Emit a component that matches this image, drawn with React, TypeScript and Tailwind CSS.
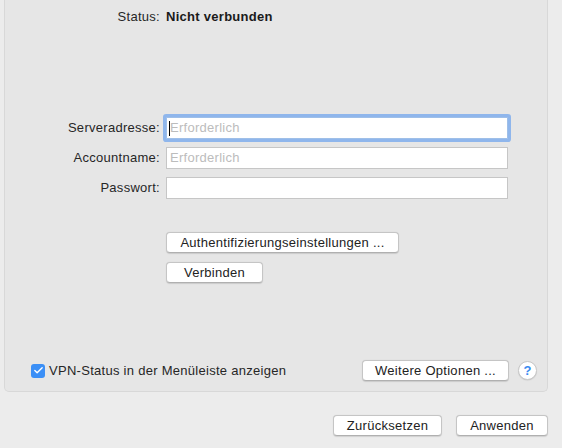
import { Check } from "lucide-react"

const btn =
  "flex h-[21px] items-center justify-center rounded-[4px] border border-[#c5c5c5] border-b-[#b0b0b0] bg-white text-[13px] text-[#222] shadow-[0_0.5px_1px_rgba(0,0,0,0.12)]"

function Field({
  label,
  placeholder,
  focused,
}: {
  label: string
  placeholder?: string
  focused?: boolean
}) {
  return (
    <div className="grid grid-cols-[155px_342px] items-center gap-[6px]">
      <span className="text-right text-[13px] text-[#262626]">{label}</span>
      <div
        className={
          focused
            ? "relative flex h-[22px] items-center rounded-[1px] border border-[#9fbfe8] bg-white pl-[3px] shadow-[0_0_0_3px_#8fb6ec]"
            : "flex h-[22px] items-center border border-[#c6c6c6] bg-white pl-[3px]"
        }
      >
        {focused ? <span className="absolute left-[2px] top-[3px] h-[15px] w-px bg-black" /> : null}
        {placeholder ? (
          <span className="text-[13px] text-[#bcbcbc]">{placeholder}</span>
        ) : null}
      </div>
    </div>
  )
}

export default function App() {
  return (
    <div className="h-[448px] w-[562px] overflow-hidden bg-[#ececec] font-['Liberation_Sans',Arial,sans-serif] tracking-[0.28px]">
      <div className="ml-[4px] mr-[14px] flex h-[392px] flex-col rounded-b-[5px] border-x border-b border-[#d8d8d8] bg-[#e6e6e6]">
        <div className="grid grid-cols-[155px_1fr] gap-[6px] pt-[9px] text-[13px] leading-[16px]">
          <span className="text-right text-[#262626]">Status:</span>
          <span className="font-bold text-[#1a1a1a]">Nicht verbunden</span>
        </div>

        <div className="mt-[92px] flex flex-col gap-[8px]">
          <Field label="Serveradresse:" placeholder="Erforderlich" focused />
          <Field label="Accountname:" placeholder="Erforderlich" />
          <Field label="Passwort:" />
        </div>

        <div className="ml-[161px] mt-[33px] flex flex-col items-start gap-[9px]">
          <button className={`${btn} w-[233px]`}>Authentifizierungseinstellungen ...</button>
          <button className={`${btn} w-[97px]`}>Verbinden</button>
        </div>

        <div className="flex-1" />

        <div className="flex items-center pb-[10px] pl-[26px] pr-[10px]">
          <span className="flex h-[14px] w-[14px] items-center justify-center rounded-[3px] bg-[#3b8ff6]">
            <Check className="h-[11px] w-[11px] text-white" strokeWidth={3} />
          </span>
          <span className="ml-[4px] text-[13px] text-[#262626]">VPN-Status in der Menüleiste anzeigen</span>
          <div className="flex-1" />
          <button className={`${btn} w-[147px]`}>Weitere Optionen ...</button>
          <span className="ml-[9px] flex h-[19px] w-[19px] items-center justify-center rounded-full border border-[#c8c8c8] bg-white text-[13px] font-bold leading-none text-[#3a8af0] shadow-[0_0.5px_1px_rgba(0,0,0,0.12)]">
            ?
          </span>
        </div>
      </div>

      <div className="flex justify-end gap-[14px] pr-[14px] pt-[23px]">
        <button className={`${btn} w-[109px]`}>Zurücksetzen</button>
        <button className={`${btn} w-[92px]`}>Anwenden</button>
      </div>
    </div>
  )
}
